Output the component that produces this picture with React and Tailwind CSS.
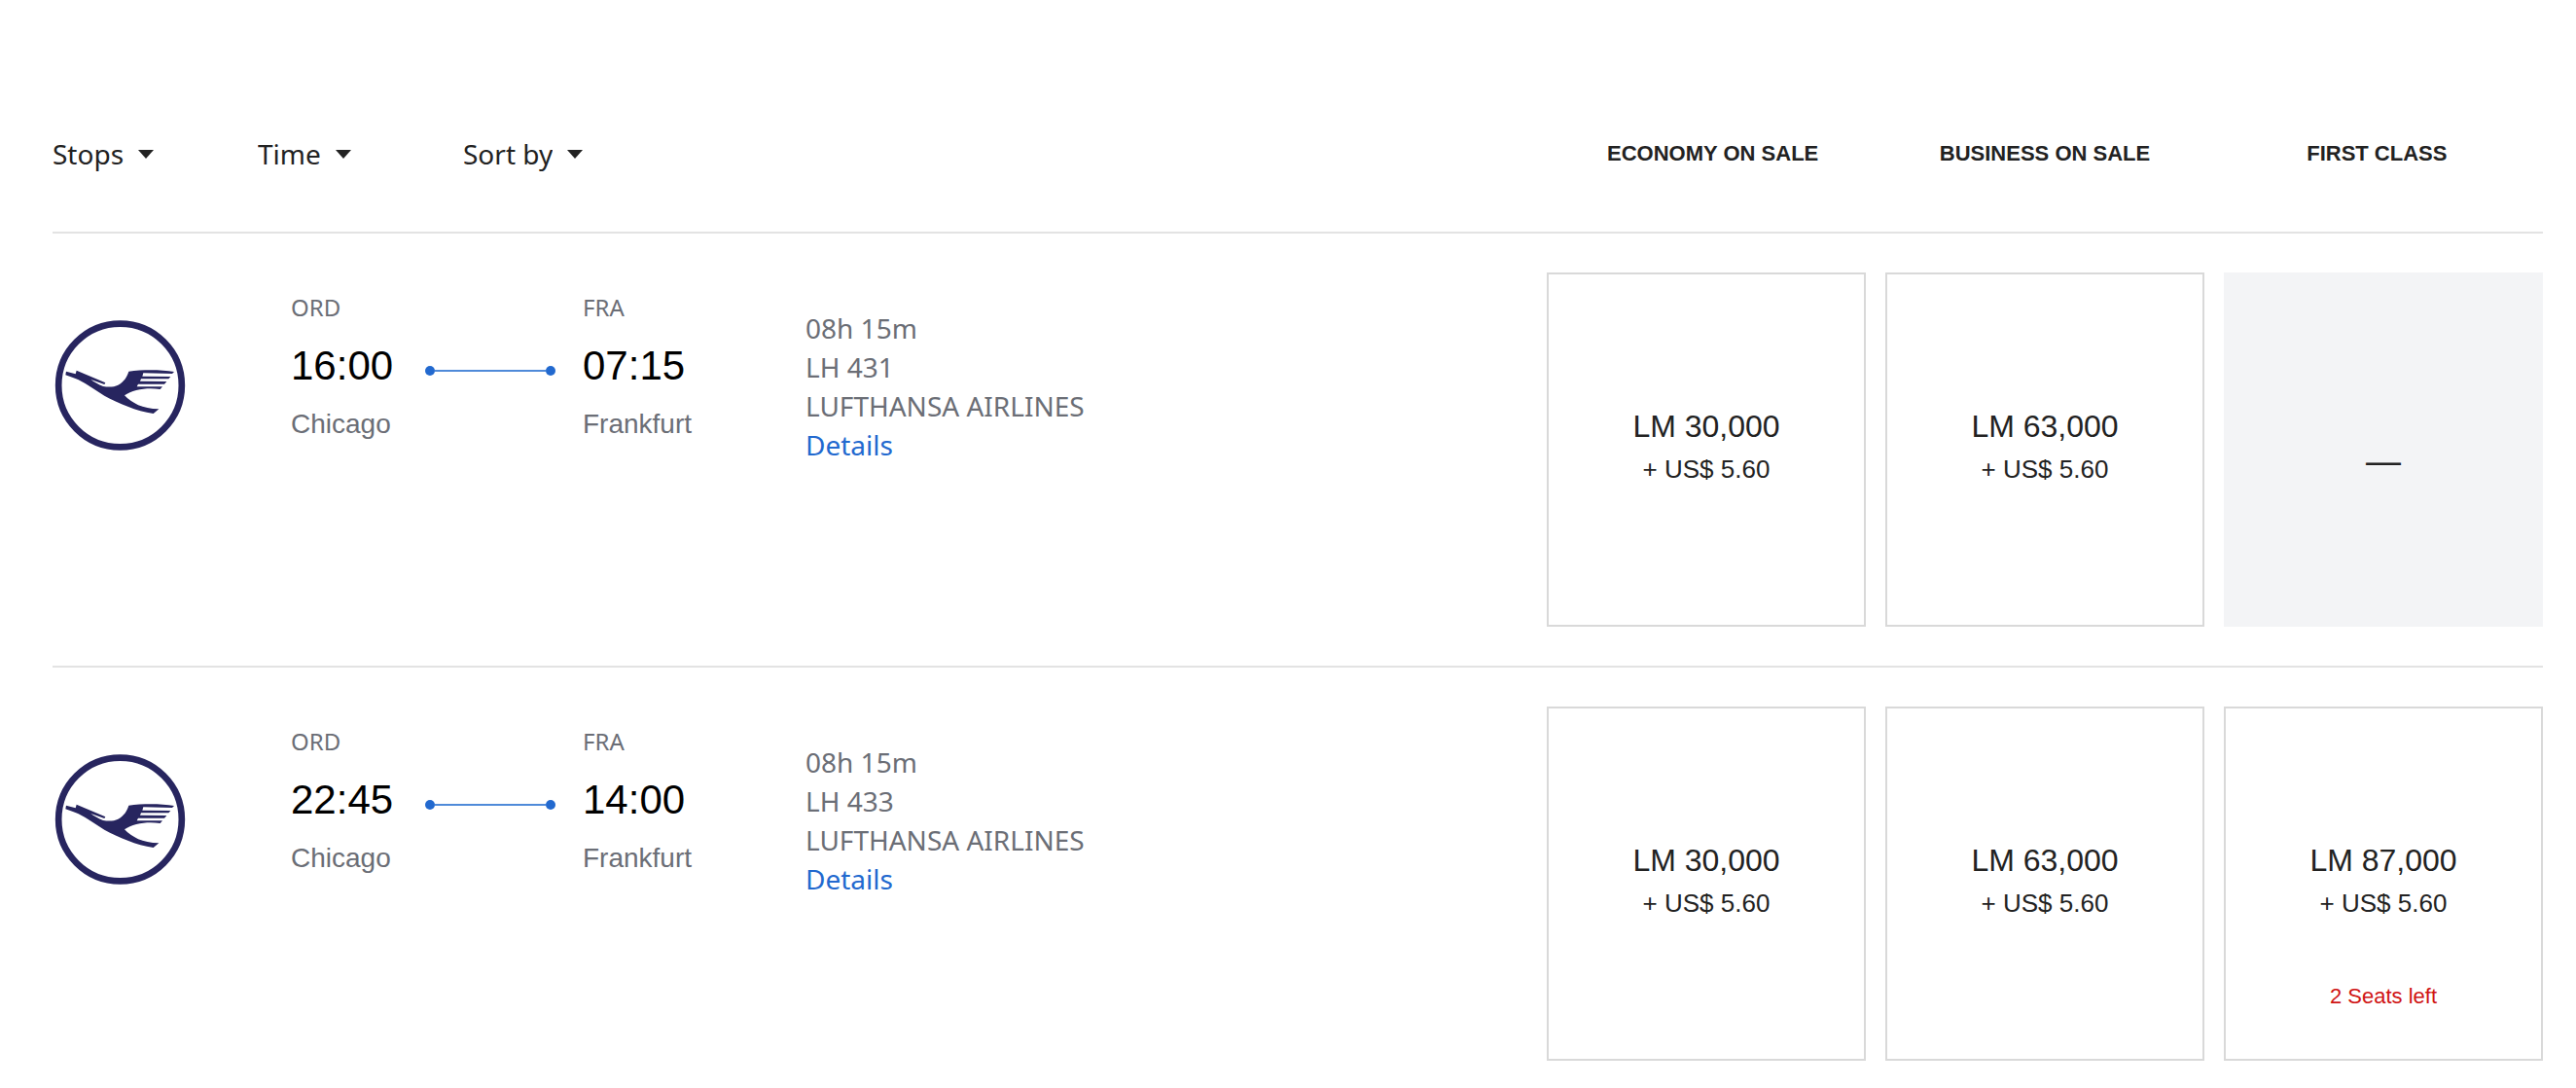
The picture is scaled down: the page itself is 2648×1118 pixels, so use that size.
import React from 'react';

const flights = [
    {
        number: "LH 431",
        duration: "08h 15m",
        airline: "LUFTHANSA AIRLINES",
        from: { code: "ORD", time: "16:00", city: "Chicago" },
        to: { code: "FRA", time: "07:15", city: "Frankfurt" },
        fares: [
            { miles: "LM 30,000", tax: "+ US$ 5.60" },
            { miles: "LM 63,000", tax: "+ US$ 5.60" },
            null,
        ],
    },
    {
        number: "LH 433",
        duration: "08h 15m",
        airline: "LUFTHANSA AIRLINES",
        from: { code: "ORD", time: "22:45", city: "Chicago" },
        to: { code: "FRA", time: "14:00", city: "Frankfurt" },
        fares: [
            { miles: "LM 30,000", tax: "+ US$ 5.60" },
            { miles: "LM 63,000", tax: "+ US$ 5.60" },
            { miles: "LM 87,000", tax: "+ US$ 5.60", note: "2 Seats left" },
        ],
    },
];

const filters = ["Stops", "Time", "Sort by"];
const cabins = ["ECONOMY ON SALE", "BUSINESS ON SALE", "FIRST CLASS"];

const CraneLogo = () => (
    <svg viewBox="42 48 420 420" className="size-[140px]" role="img" aria-label="Lufthansa">
        <circle cx="250.500" cy="258" r="190" fill="none" stroke="#27255f" strokeWidth="20" />
        <path
            fill="#27255f"
            d="M84 215 L113 223 L116 212 L205 250 L202 255 L160 240 C168 247 184 255 198 261 C216 264 232 263 244 257 C262 247 272 232 277 215 C320 209 376 209 417 216 L411 222 L322 220 L319 230 L406 231 L400 238 L315 238 L312 245 L394 246 L387 254 L306 254 L302 262 L381 262 L374 270 C336 264 290 270 264 289 C288 313 318 330 370 331 L353 345 C300 337 246 313 202 290 C176 275 150 255 122 241 C110 236 96 231 82 226 Z"
        />
    </svg>
);

const Filter = ({ label }) => (
    <label className="flex items-center w-[211px]">
        <select
            aria-label={label}
            className="appearance-none field-sizing-content bg-transparent pr-[31px] font-['Noto_Sans',sans-serif] text-[28px] leading-10 text-[#222]"
        >
            <option>{label}</option>
        </select>
        <svg viewBox="0 0 16 9" className="w-4 h-[9px] -ml-4 pointer-events-none" aria-hidden="true">
            <path d="M0 0h16L8 9z" fill="#222" />
        </svg>
    </label>
);

const Airport = ({ code, time, city }) => (
    <div>
        <p className="font-['Noto_Sans',sans-serif] text-2xl leading-8 text-[#6b6e76]">{code}</p>
        <p className="my-4 text-[42px] leading-[56px] text-black">{time}</p>
        <p className="text-[28px] leading-8 text-[#6b6e76]">{city}</p>
    </div>
);

const Fare = ({ fare }) => {
    if (!fare) {
        return (
            <div className="flex items-center justify-center h-[364px] pt-6 bg-gray-100 text-4xl">—</div>
        );
    }

    return (
        <button className="flex flex-col items-center h-[364px] pt-[134px] border-2 border-[#d9d9d9] bg-white">
            <span className="text-[32px] leading-[44px]">{fare.miles}</span>
            <span className="text-[26px] leading-[44px]">{fare.tax}</span>
            {fare.note && <span className="mt-[58px] text-[22px] leading-8 text-[#d01414]">{fare.note}</span>}
        </button>
    );
};

const FlightRow = ({ flight }) => (
    <li className="flex py-10 border-t-2 border-[#e3e3e3]">
        <div className="w-[245px] pt-[46px]">
            <CraneLogo />
        </div>

        <div className="w-[138px] pt-5">
            <Airport {...flight.from} />
        </div>

        {/* Route line */}
        <div className="flex items-center self-start w-[162px] h-2.5 mt-24">
            <span className="size-2.5 rounded-full bg-[#2269cf]" />
            <span className="w-[114px] h-0.5 bg-[#4f8ad9]" />
            <span className="size-2.5 rounded-full bg-[#2269cf]" />
        </div>

        <div className="w-[229px] pt-5">
            <Airport {...flight.to} />
        </div>

        <div className="flex-1 pt-[37px] font-['Noto_Sans',sans-serif] text-[28px] leading-10 text-[#6b6e76]">
            <p>{flight.duration}</p>
            <p>{flight.number}</p>
            <p>{flight.airline}</p>
            <a href="#details" className="text-[#2269cf]">Details</a>
        </div>

        <div className="grid grid-cols-3 gap-5 w-2/5">
            {flight.fares.map((fare, i) => <Fare key={cabins[i]} fare={fare} />)}
        </div>
    </li>
);

const App = () => {
    return (
        <main className="min-h-screen pt-[138px] pl-[54px] pr-[34px] bg-white font-['Liberation_Sans',Arial,sans-serif] text-[#222]">
            <header className="flex items-center pb-[60px]">
                <div className="flex flex-1">
                    {filters.map((label) => <Filter key={label} label={label} />)}
                </div>
                <div className="grid grid-cols-3 w-2/5 text-center">
                    {cabins.map((cabin) => (
                        <h2 key={cabin} className="text-[22px] leading-10 font-bold">{cabin}</h2>
                    ))}
                </div>
            </header>

            <ul>
                {flights.map((flight) => <FlightRow key={flight.number} flight={flight} />)}
            </ul>
        </main>
    );
};

export default App;
